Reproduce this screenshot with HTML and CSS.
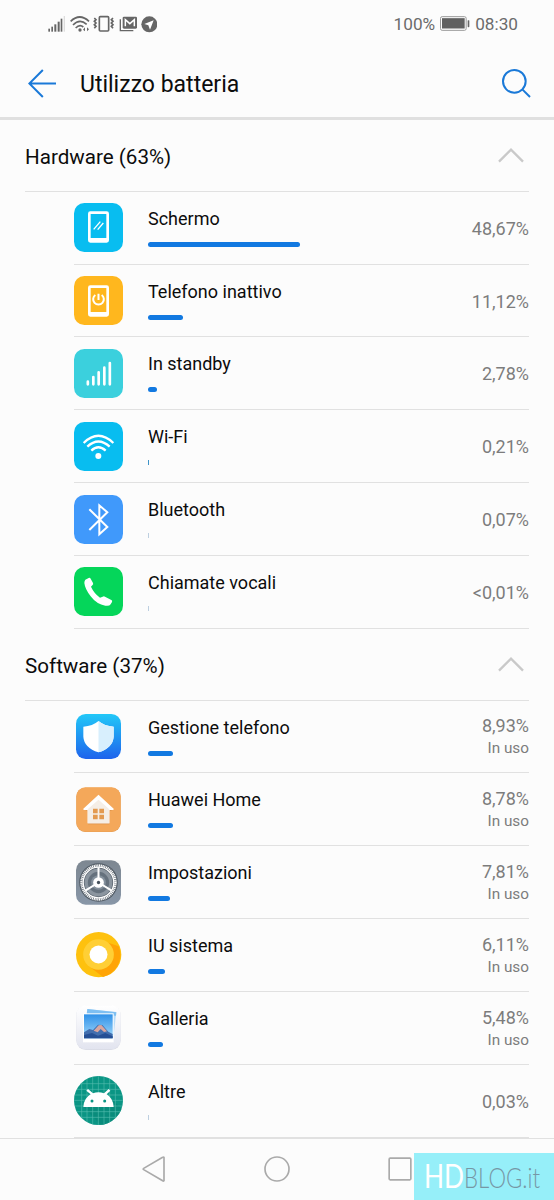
FILE: index.html
```html
<!DOCTYPE html>
<html lang="it">
<head>
<meta charset="utf-8">
<title>Utilizzo batteria</title>
<link rel="stylesheet" href="styles.css">
</head>
<body>
<div class="screen">
  <div class="status">
    <svg class="status-icons" viewBox="0 0 330 60">
      <g fill="#666"><rect x="4" y="44" width="5" height="9"/><rect x="13" y="38" width="5" height="15"/><rect x="22" y="31" width="6" height="22"/><rect x="32" y="23" width="6" height="30"/><rect x="41" y="14" width="5" height="39"/><rect x="50" y="6" width="4" height="47" fill="#ddd"/></g>
      <g fill="none" stroke="#666" stroke-width="5"><path d="M71 22Q98 -4 126 22M78 33Q98 13 119 31M86 42Q98 30 109 39"/><path d="M142 12l5 5-5 5 5 5-5 5 5 5-5 6M198 12l-5 5 5 5-5 5 5 5-5 5 5 6" stroke-width="5"/><rect x="157" y="8" width="28" height="43" rx="3" stroke-width="5"/><path d="M220 16V50H259" stroke-width="4"/></g>
      <circle cx="99" cy="48" r="5" fill="#666"/><path d="M114 40v12l-6-5zM120 40v12l6-6z" fill="#666"/>
      <rect x="227" y="8" width="43" height="36" rx="4" fill="#666"/><path d="M235 37V17l13.500 12 13.500-12v20" fill="none" stroke="#fff" stroke-width="4.500"/>
      <circle cx="307" cy="31" r="24" fill="#666"/><path d="M320 19l-28 11 12 4 5 13z" fill="#fff"/>
    </svg>
    <div class="status-right"><span class="charge">100%</span>
      <svg class="battery" viewBox="0 0 90 44"><rect x="1.5" y="1.5" width="77" height="41" rx="5" fill="none" stroke="#999" stroke-width="3"/><rect x="6" y="6" width="68" height="31" fill="#606060"/><rect x="83" y="12" width="5" height="21" rx="2" fill="#666"/></svg>
      <span class="clock">08:30</span></div>
  </div>
  <header class="appbar">
    <svg class="back" viewBox="0 0 84 86"><path d="M43 3L3 43l40 40M3 43h79" fill="none" stroke="#1a79d8" stroke-width="6"/></svg>
    <h1>Utilizzo batteria</h1>
    <svg class="search" viewBox="0 0 87 87"><circle cx="37" cy="37" r="34" fill="none" stroke="#1a79d8" stroke-width="6"/><path d="M61 61l23 23" stroke="#1a79d8" stroke-width="6"/></svg>
  </header>
  <main>
    <section>
      <div class="group"><h2>Hardware (63%)</h2><svg class="chevron" viewBox="0 0 78 45"><path d="M3 41L39 5l36 36" fill="none" stroke="#c9c9c9" stroke-width="7"/></svg></div>
      <ul>
        <li><svg class="icon" viewBox="0 0 147 147"><rect width="147" height="147" rx="31" fill="#08bdf0"/><path fill-rule="evenodd" fill="#fff" d="M49 25h49q7 0 7 7v80q0 7-7 7H49q-7 0-7-7V32q0-7 7-7zM50 33v72h47V33z"/><path d="M59 79l20-23M71 80l17-20" stroke="#fff" stroke-width="4"/></svg>
          <div class="usage"><span class="name">Schermo</span><i class="bar" style="width:151.5px"></i></div><div class="value">48,67%</div></li>
        <li><svg class="icon" viewBox="0 0 147 147"><rect width="147" height="147" rx="31" fill="#ffb71e"/><path fill-rule="evenodd" fill="#fff" d="M49 28h49q7 0 7 7v80q0 7-7 7H49q-7 0-7-7V35q0-7 7-7zM50 36v72h47V36z"/><path d="M64 57a16 16 0 1 0 19 0M73.500 53v19" fill="none" stroke="#fff" stroke-width="6"/></svg>
          <div class="usage"><span class="name">Telefono inattivo</span><i class="bar" style="width:35px"></i></div><div class="value">11,12%</div></li>
        <li><svg class="icon" viewBox="0 0 147 147"><rect width="147" height="147" rx="31" fill="#3bd0dd"/><path d="M41.500 98v8M58 84v22M74 70v36M91 56v50M107.500 42v64" stroke="#fff" stroke-width="8" stroke-linecap="round"/></svg>
          <div class="usage"><span class="name">In standby</span><i class="bar" style="width:9px"></i></div><div class="value">2,78%</div></li>
        <li><svg class="icon" viewBox="0 0 147 147"><rect width="147" height="147" rx="31" fill="#08bdf0"/><g fill="none" stroke="#fff" stroke-width="7"><path d="M29 63Q73 20 118 63M40 74Q73 43 107 74M52 86Q73 66 95 86"/></g><circle cx="73" cy="102" r="9" fill="#fff"/></svg>
          <div class="usage"><span class="name">Wi-Fi</span><i class="bar tick"></i></div><div class="value">0,21%</div></li>
        <li><svg class="icon" viewBox="0 0 147 147"><rect width="147" height="147" rx="31" fill="#4099fb"/><path d="M46 43L100 96 76 118V31L100 52 46 105" fill="none" stroke="#fff" stroke-width="6"/></svg>
          <div class="usage"><span class="name">Bluetooth</span><i class="bar tick faint"></i></div><div class="value">0,07%</div></li>
        <li><svg class="icon" viewBox="0 0 147 147"><rect width="147" height="147" rx="31" fill="#05d65a"/><path fill="#fff" d="M34 38L44 33Q48 31 50 35L57 48Q59 52 55 55L51 59Q60 79 78 92L86 89Q90 87 93 89L112 99Q116 101 114 105L110 112Q106 118 94 116Q68 112 50 88Q33 66 31 48Q31 42 34 38z"/></svg>
          <div class="usage"><span class="name">Chiamate vocali</span><i class="bar tick faint"></i></div><div class="value">&lt;0,01%</div></li>
      </ul>
    </section>
    <section>
      <div class="group"><h2>Software (37%)</h2><svg class="chevron" viewBox="0 0 78 45"><path d="M3 41L39 5l36 36" fill="none" stroke="#c9c9c9" stroke-width="7"/></svg></div>
      <ul>
        <li><svg class="icon" viewBox="0 0 147 147"><defs><linearGradient id="blue" x2="0" y2="1"><stop stop-color="#22c8f8"/><stop offset="1" stop-color="#1e63ec"/></linearGradient></defs><rect x="6" y="6" width="135" height="135" rx="29" fill="url(#blue)"/><path d="M73.500 27Q91 42 119 44V74Q117 107 73.500 121Q30 107 28 74V44Q56 42 73.500 27z" fill="#fff"/><path d="M73.500 27Q91 42 119 44V74Q117 107 73.500 121z" fill="#d8effd"/></svg>
          <div class="usage"><span class="name">Gestione telefono</span><i class="bar" style="width:25px"></i></div><div class="value">8,93%<small>In uso</small></div></li>
        <li><svg class="icon" viewBox="0 0 147 147"><rect x="7" y="8" width="133" height="133" rx="27" fill="#d9944e"/><rect x="7" y="7" width="133" height="133" rx="27" fill="#f4a85a"/><path d="M34 75L73.500 35l42 40-10 4v39H42V79z" fill="#c9803c" opacity=".6"/><path d="M73.500 29L119 71q1 4-3 4h-10v40H41V75H31q-4 0-3-4z" fill="#fff"/><path d="M41 75h65v40H41z" fill="#f5eee6"/><path d="M41 73L73.500 44 106 73v4H41z" fill="#f5eee6"/><path d="M57 71h14v14H57zM76 71h14v14H76zM57 89h14v14H57zM76 89h14v14H76z" fill="#e39a50"/></svg>
          <div class="usage"><span class="name">Huawei Home</span><i class="bar" style="width:24.500px"></i></div><div class="value">8,78%<small>In uso</small></div></li>
        <li><svg class="icon" viewBox="0 0 147 147"><defs><linearGradient id="slate" x2="0" y2="1"><stop stop-color="#7d8791"/><stop offset="1" stop-color="#8896a7"/></linearGradient></defs><rect x="6" y="7" width="135" height="133" rx="29" fill="url(#slate)"/><circle cx="73.500" cy="73.500" r="58" fill="#545e68"/><circle cx="73.500" cy="73.500" r="42" fill="#8b959f"/><circle cx="73.500" cy="73.500" r="32" fill="#65717d"/><circle cx="73.500" cy="73.500" r="22" fill="#85919d"/><circle cx="73.500" cy="73.500" r="51" fill="none" stroke="#fff" stroke-width="7" stroke-dasharray="3.500 1.840"/><circle cx="73.500" cy="73.500" r="46" fill="none" stroke="#fff" stroke-width="4"/><path d="M73.500 28v45.500L34 98M73.500 73.500L113 98" fill="none" stroke="#fff" stroke-width="6"/><circle cx="73.500" cy="73.500" r="16" fill="#fff"/><circle cx="73.500" cy="73.500" r="5" fill="#46515c"/></svg>
          <div class="usage"><span class="name">Impostazioni</span><i class="bar" style="width:22px"></i></div><div class="value">7,81%<small>In uso</small></div></li>
        <li><svg class="icon" viewBox="0 0 147 147"><circle cx="74" cy="74" r="68" fill="#fec10e"/><path d="M105 39L134 49A68 68 0 0 1 87 141L44 108z" fill="#ffa406"/><circle cx="73.500" cy="73.500" r="46" fill="#ffcf35"/><circle cx="73.500" cy="73.500" r="27" fill="#fff"/></svg>
          <div class="usage"><span class="name">IU sistema</span><i class="bar" style="width:17px"></i></div><div class="value">6,11%<small>In uso</small></div></li>
        <li><svg class="icon" viewBox="0 0 147 147"><defs><linearGradient id="pearl" x2="0" y2="1"><stop stop-color="#fff"/><stop offset="1" stop-color="#e2e4ef"/></linearGradient><linearGradient id="sky" x2="0" y2="1"><stop stop-color="#2f91e8"/><stop offset="1" stop-color="#a3d9fb"/></linearGradient></defs><rect x="7" y="8" width="133" height="133" rx="29" fill="#d8dae4"/><rect x="7" y="7" width="133" height="132" rx="28" fill="url(#pearl)"/><path d="M41 18L127 27 119 96 34 87z" fill="#b8dcf8"/><path d="M40 18L127 28l-1 10-88-6z" fill="#7dbff2"/><path d="M27 31h92v87H27z" fill="#fff"/><path d="M30 34h86v72H30z" fill="url(#sky)"/><path d="M30 88l16-10 11 3 15-16 13 1 18 20 13 7v13H30z" fill="#426eae"/><path d="M59 83l15-16 8-1 17 19-9 2-10-9-9 10z" fill="#d8a6a0"/><path d="M30 96l24-6 18 8 22-8 22 10v6H30z" fill="#254f95"/></svg>
          <div class="usage"><span class="name">Galleria</span><i class="bar" style="width:15px"></i></div><div class="value">5,48%<small>In uso</small></div></li>
        <li><svg class="icon" viewBox="0 0 147 147"><defs><clipPath id="disc"><circle cx="73.500" cy="73.500" r="73.500"/></clipPath></defs><g clip-path="url(#disc)"><path fill="#0a9584" d="M0 0h147v147H0z"/><path d="M92 48L119 75 147 103V147H80L30 94z" fill="#078473" opacity=".5"/><path d="M23 0v147M39 0v147M56 0v147M73 0v147M90 0v147M107 0v147M124 0v147M0 23h147M0 40h147M0 57h147M0 73h147M0 90h147M0 107h147M0 124h147" stroke="#55bdb0" stroke-width="1.800"/></g><path d="M28 93Q30 66 50 55L37 44l5-5 15 13Q73 45 90 52l14-13 5 5-11 11Q117 66 119 93z" fill="#fff"/><circle cx="54" cy="75" r="4.500" fill="#0a9584"/><circle cx="92" cy="75" r="4.500" fill="#0a9584"/></svg>
          <div class="usage"><span class="name">Altre</span><i class="bar tick faint"></i></div><div class="value">0,03%</div></li>
      </ul>
    </section>
  </main>
  <nav>
    <svg viewBox="0 0 78 78"><path d="M69 4V74Q67 76 65 74L8 41Q5 39 8 37L65 4Q68 2 69 4z" fill="none" stroke="#aaa" stroke-width="5"/></svg>
    <svg viewBox="0 0 78 78"><circle cx="39" cy="39" r="36" fill="none" stroke="#aaa" stroke-width="5"/></svg>
    <svg viewBox="0 0 78 78"><rect x="6.500" y="6.500" width="65" height="65" rx="3" fill="none" stroke="#aaa" stroke-width="5"/></svg>
  </nav>
  <div class="watermark"><svg viewBox="0 0 140 47"><text x="10" y="35" textLength="116" lengthAdjust="spacingAndGlyphs"><tspan class="hd">HD</tspan><tspan class="blog">BLOG.it</tspan></text></svg></div>
</div>
</body>
</html>
```
FILE: styles.css
```css
* { box-sizing: border-box; }
body { margin: 0; background: #fcfcfc; font-family: Roboto, sans-serif; color: #0c0c0c; }
svg { display: block; flex: none; }
.screen { position: relative; width: 554px; height: 1200px; overflow: hidden; display: flex; flex-direction: column; }
.status { height: 47px; padding: 0 36px 0 47px; display: flex; justify-content: space-between; align-items: center; color: #6b6b6b; font-size: 17.2px; }
.status-icons { width: 110px; height: 20px; }
.status-right { display: flex; align-items: center; }
.battery { width: 30px; height: 15px; margin: 0 5px; }
.appbar { height: 73px; border-bottom: 3px solid #e0e0e0; display: flex; align-items: center; padding: 2px 23px 0 28px; }
.back { width: 29px; height: 29px; }
.search { width: 29px; height: 29px; margin-left: auto; }
h1 { font-size: 23px; font-weight: 400; margin: 3px 0 0 23px; }
h2 { font-size: 20.6px; font-weight: 400; margin: 3px 0 0; }
.group { height: 71.8px; margin: 0 25px; border-bottom: 1px solid #e1e1e1; display: flex; align-items: center; justify-content: space-between; }
.chevron { width: 26px; height: 15px; margin: 1px 5px 0 0; }
ul { list-style: none; margin: 0; padding: 0 25px 0 74px; }
li { height: 72.83px; border-bottom: 1px solid #e1e1e1; display: flex; align-items: center; }
.icon { width: 49px; height: 49px; }
.usage { align-self: stretch; padding: 16px 0 0 25px; flex: 1; }
.name { display: block; font-size: 18px; line-height: 22px; }
.bar { display: block; height: 5px; margin-top: 12px; border-radius: 2.5px; background: #1279e1; }
.tick { width: 1px; border-radius: 0; background: #3f94c8; }
.faint { background: #bdcfe0; }
.value { font-size: 18px; line-height: 22px; padding-top: 2px; color: #7c7c7c; text-align: right; }
small { display: block; font-size: 15.3px; }
nav { flex: 1; border-top: 1px solid #e1e1e1; padding: 0 141px; display: flex; justify-content: space-between; align-items: center; }
nav svg { width: 26px; height: 26px; }
.watermark { position: absolute; left: 414px; bottom: 0; width: 140px; height: 47px; background: #96eff9; }
.hd { font: 400 32px Lato, sans-serif; fill: #fff; }
.blog { font: 300 27px Lato, sans-serif; fill: #7697a5; }
```
